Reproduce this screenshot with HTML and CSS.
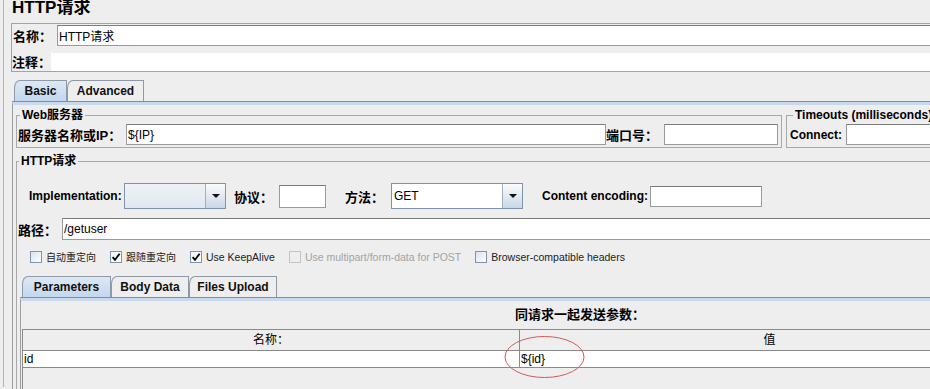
FILE: index.html
```html
<!DOCTYPE html>
<html lang="zh-CN">
<head>
  <meta charset="UTF-8" />
  <meta name="viewport" content="width=device-width, initial-scale=1.0" />
  <title>HTTP请求</title>
  <link rel="stylesheet" href="styles.css">
</head>
<body>

  <div id="painel">
    <h1 class="titulo">HTTP请求</h1>

    <!-- nome / comentario -->
    <div class="nome-box">
      <div class="linha">
        <span class="rotulo rot-nome">名称：</span>
        <input class="campo campo-nome" type="text" value="HTTP请求" />
      </div>
      <div class="linha linha-comentario">
        <span class="rotulo rot-comentario">注释：</span>
        <div class="campo-comentario"></div>
      </div>
    </div>

    <div class="abas abas-topo">
      <div class="aba ativa aba-basic">Basic</div>
      <div class="aba aba-advanced">Advanced</div>
    </div>

    <div class="corpo">
      <div class="linha-servidor">
        <fieldset class="grupo grupo-web">
          <legend>Web服务器</legend>
          <div class="linha">
            <span class="rotulo rot-ip">服务器名称或IP：</span>
            <input class="campo campo-ip" type="text" value="${IP}" />
            <span class="rotulo rot-porta">端口号：</span>
            <input class="campo campo-porta" type="text" value="" />
          </div>
        </fieldset>
        <fieldset class="grupo grupo-timeout">
          <legend>Timeouts (milliseconds)</legend>
          <div class="linha">
            <span class="rotulo en rot-connect">Connect:</span>
            <input class="campo campo-connect" type="text" value="" />
          </div>
        </fieldset>
      </div>

      <fieldset class="grupo grupo-http">
        <legend>HTTP请求</legend>

        <div class="linha linha-impl">
          <span class="rotulo en rot-impl">Implementation:</span>
          <div class="combo combo-impl">
            <div class="combo-valor"></div>
            <div class="combo-btn"></div>
          </div>
          <span class="rotulo rot-protocolo">协议：</span>
          <input class="campo campo-protocolo" type="text" value="" />
          <span class="rotulo rot-metodo">方法：</span>
          <div class="combo combo-metodo">
            <div class="combo-valor">GET</div>
            <div class="combo-btn"></div>
          </div>
          <span class="rotulo en rot-encoding">Content encoding:</span>
          <input class="campo campo-encoding" type="text" value="" />
        </div>

        <div class="linha linha-caminho">
          <span class="rotulo rot-caminho">路径：</span>
          <input class="campo campo-caminho" type="text" value="/getuser" />
        </div>

        <div class="opcoes">
          <label class="opcao"><span class="caixa"></span><span class="cn">自动重定向</span></label>
          <label class="opcao"><span class="caixa marcada"><svg viewBox="0 0 10 10"><path d="M1.6 5.2 L4 7.9 L8.6 1.8" /></svg></span><span class="cn">跟随重定向</span></label>
          <label class="opcao"><span class="caixa marcada"><svg viewBox="0 0 10 10"><path d="M1.6 5.2 L4 7.9 L8.6 1.8" /></svg></span>Use KeepAlive</label>
          <label class="opcao desativada"><span class="caixa"></span>Use multipart/form-data for POST</label>
          <label class="opcao"><span class="caixa"></span>Browser-compatible headers</label>
        </div>

        <div class="abas abas-params">
          <div class="aba ativa aba-parameters">Parameters</div>
          <div class="aba aba-body">Body Data</div>
          <div class="aba aba-files">Files Upload</div>
        </div>

        <div class="corpo-params">
          <div class="legenda-params">同请求一起发送参数：</div>
          <div class="params">
            <div class="params-cab">
              <div>名称：</div>
              <div>值</div>
            </div>
            <div class="params-linha">
              <div>id</div>
              <div>${id}</div>
            </div>
            <!-- marcacao vermelha -->
            <svg class="marca" width="82" height="43" viewBox="0 0 82 43">
              <ellipse cx="40.5" cy="21" rx="39.5" ry="20.5" />
            </svg>
          </div>
        </div>
      </fieldset>
    </div>
  </div>

</body>
</html>
```

FILE: styles.css
```css
* {
  box-sizing: border-box;
}

html, body {
  margin: 0;
  height: 100%;
}

body {
  background: #eeeeee;
  font-family: "Liberation Sans", "Noto Sans CJK SC", sans-serif;
  font-size: 12px;
  color: #000;
  overflow: hidden;
}

#painel {
  width: 1120px;
  height: 389px;
  margin-left: 3px;
  border-left: 1px solid #b4b4b4;
}

.titulo {
  margin: -2px 0 0;
  padding-left: 8px;
  font-size: 17px;
  line-height: 20px;
}

.linha {
  display: flex;
  align-items: center;
}

.rotulo {
  flex: none;
  font-weight: bold;
  font-size: 13px;
  white-space: nowrap;
}

.rotulo.en {
  font-size: 12px;
}

.campo {
  flex: none;
  min-width: 0;
  height: 21px;
  padding: 0 1px;
  border: 1px solid #9a9a9a;
  border-top-color: #7c7c7c;
  background: #fff;
  font: 12px "Liberation Sans", "Noto Sans CJK SC", sans-serif;
  color: #000;
  outline: none;
}

/* nome e comentario */
.nome-box {
  margin: 5px 0 0 7px;
  padding-top: 1px;
  border: 1px solid #a3a3a3;
}

.rot-nome {
  width: 45px;
  padding-left: 1px;
}

.campo-nome {
  flex: 1;
}

.linha-comentario {
  margin-top: 6px;
}

.rot-comentario {
  width: 39px;
}

.campo-comentario {
  flex: 1;
  height: 18px;
  background: #fff;
}

/* abas */
.abas {
  display: flex;
  padding-left: 2px;
  border-bottom: 1px solid #7f8ea8;
}

.abas-topo {
  margin: 8px 0 0 8px;
}

.aba {
  height: 21px;
  line-height: 20px;
  text-align: center;
  font-weight: bold;
  color: #111;
  background: #eeeeee;
  border: 1px solid #8e99a8;
  border-bottom: none;
  border-top-left-radius: 6px 8px;
}

.aba.ativa {
  background: linear-gradient(#dce8f5, #c4d7ed);
}

.aba-basic { width: 53px; }
.aba-advanced { width: 77px; }
.aba-parameters { width: 89px; }
.aba-body { width: 78px; }
.aba-files { width: 88px; }

.corpo {
  margin-left: 8px;
  padding-left: 3px;
  border-left: 1px solid #9c9c9c;
  border-top: 3px solid #c9d9ee;
}

/* grupos */
.linha-servidor {
  display: flex;
  gap: 4px;
  margin-top: 3px;
}

fieldset.grupo {
  margin: 0;
  min-width: 0;
  border: 1px solid #a9a9a9;
}

.grupo legend {
  padding: 0 2px;
  font-weight: bold;
  font-size: 12px;
  line-height: 15px;
}

.grupo-web {
  flex: none;
  width: 766px;
  padding: 1px 3px 2px 1px;
}

.grupo-web legend {
  margin-left: 2px;
}

.rot-ip { width: 108px; }
.campo-ip { width: 480px; }
.rot-porta { width: 58px; }
.campo-porta { width: 114px; }

.grupo-timeout {
  flex: 1;
  padding: 1px 0 2px 3px;
}

.grupo-timeout legend {
  margin-left: 3px;
}

.rot-connect { width: 56px; }
.campo-connect { flex: 1; }

fieldset.grupo-http {
  margin-top: 6px;
  padding: 0;
}

.grupo-http legend {
  margin-left: 2px;
}

/* implementation / protocolo / metodo */
.linha-impl {
  margin-top: 14px;
  height: 26px;
}

.rot-impl {
  margin-left: 12px;
  width: 95px;
}

.combo {
  flex: none;
  display: flex;
  height: 26px;
  border: 1px solid #7f93ab;
}

.combo-impl { width: 102px; }
.combo-metodo { width: 132px; }

.combo-valor {
  flex: 1;
  padding-left: 2px;
  line-height: 24px;
  background: linear-gradient(#eef2f6, #e0e7ef);
}

.combo-metodo .combo-valor {
  background: #fff;
}

.combo-btn {
  width: 20px;
  display: flex;
  align-items: center;
  justify-content: center;
  border-left: 1px solid #9db0c6;
  background: linear-gradient(#fbfcfd, #c8d7e8);
}

.combo-btn::after {
  content: "";
  border-left: 4px solid transparent;
  border-right: 4px solid transparent;
  border-top: 4px solid #111;
}

.rot-protocolo {
  margin-left: 8px;
  width: 45px;
}

.campo-protocolo {
  width: 47px;
  height: 23px;
}

.rot-metodo {
  margin-left: 19px;
  width: 46px;
}

.rot-encoding {
  margin-left: 19px;
  width: 108px;
}

.campo-encoding { width: 112px; }

/* caminho */
.linha-caminho {
  margin-top: 9px;
}

.rot-caminho {
  width: 45px;
  padding-left: 1px;
}

.campo-caminho {
  flex: 1;
  height: 22px;
}

/* checkboxes */
.opcoes {
  display: flex;
  align-items: center;
  height: 13px;
  margin: 10px 0 0 13px;
  font-size: 10.5px;
  color: #222;
}

.opcao {
  display: flex;
  align-items: center;
  gap: 4px;
  margin-right: 14px;
  white-space: nowrap;
}

.opcao .cn {
  font-size: 10px;
}

.caixa {
  width: 12px;
  height: 12px;
  display: flex;
  border: 1px solid #8094ae;
  background: linear-gradient(135deg, #d9e3ef, #fdfeff);
}

.caixa.marcada {
  background: linear-gradient(135deg, #eef3f8, #fff);
}

.caixa svg {
  width: 10px;
  height: 10px;
}

.caixa path {
  fill: none;
  stroke: #000;
  stroke-width: 1.8;
}

.opcao.desativada {
  color: #a3a3a3;
}

.opcao.desativada .caixa {
  border-color: #c4c4c4;
  background: #eeeeee;
}

/* parametros */
.abas-params {
  margin: 13px 0 0 3px;
}

.corpo-params {
  margin-left: 3px;
  border-left: 1px solid #9c9c9c;
  border-top: 3px solid #c9d9ee;
}

.legenda-params {
  margin-top: 6px;
  padding-left: 494px;
  font-weight: bold;
  font-size: 13px;
  line-height: 16px;
}

.params {
  position: relative;
  height: 80px;
  margin: 6px 0 0 1px;
  border-left: 1px solid #8c8c8c;
}

.params-cab,
.params-linha {
  display: grid;
  grid-template-columns: 496px 500px;
}

.params-cab {
  height: 22px;
  line-height: 20px;
  text-align: center;
  border-top: 1px solid #8a8a8a;
  border-bottom: 1px solid #8a8a8a;
}

.params-linha {
  height: 17px;
  line-height: 16px;
  background: #fff;
  border-bottom: 1px solid #8a8a8a;
}

.params-cab div + div,
.params-linha div + div {
  border-left: 1px solid #8a8a8a;
}

.params-linha div {
  padding-left: 1px;
}

.marca {
  position: absolute;
  left: 481px;
  top: 7px;
}

.marca ellipse {
  fill: none;
  stroke: #cf5b5b;
  stroke-width: 1;
}
```
